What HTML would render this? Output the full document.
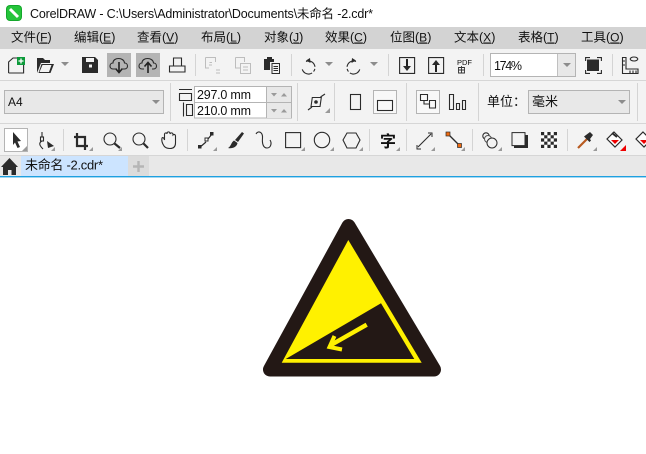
<!DOCTYPE html>
<html><head><meta charset="utf-8"><style>
html,body{margin:0;padding:0;background:#fff;overflow:hidden}
svg{display:block}
text{font-family:"Liberation Sans","Noto Sans CJK SC",sans-serif;font-size:12px;fill:#111}
.m text{font-size:12.500px}
.m tspan{text-decoration:underline;font-size:12px}
.i{fill:none;stroke:#2b2b2b;stroke-width:1.100}
.d{fill:#2b2b2b}
.g{fill:#8c8c8c}
.f{fill:#9a9a9a}
.l{fill:none;stroke:#bdbdbd;stroke-width:1}
</style></head><body>
<svg width="646" height="454" viewBox="0 0 646 454" xmlns="http://www.w3.org/2000/svg">
<rect width="646" height="454" fill="#fff"/>
<!-- title -->
<rect x="6" y="5" width="16" height="16" rx="4" fill="#14a72b"/>
<rect x="7" y="6" width="14" height="14" rx="3" fill="#25c43a"/>
<path d="M10 9L18 17" stroke="#fff" stroke-width="3"/>
<text x="30" y="18" textLength="343" style="font-size:12.500px">CorelDRAW - C:\Users\Administrator\Documents\未命名 -2.cdr*</text>
<!-- menu -->
<rect y="27" width="646" height="22" fill="#d3d3d3"/>
<g class="m">
<text x="11" y="41.500">文件(<tspan>F</tspan>)</text>
<text x="74" y="41.500">编辑(<tspan>E</tspan>)</text>
<text x="137" y="41.500">查看(<tspan>V</tspan>)</text>
<text x="201" y="41.500">布局(<tspan>L</tspan>)</text>
<text x="264" y="41.500">对象(<tspan>J</tspan>)</text>
<text x="325" y="41.500">效果(<tspan>C</tspan>)</text>
<text x="390" y="41.500">位图(<tspan>B</tspan>)</text>
<text x="454" y="41.500">文本(<tspan>X</tspan>)</text>
<text x="518" y="41.500">表格(<tspan>T</tspan>)</text>
<text x="581" y="41.500">工具(<tspan>O</tspan>)</text>
</g>
<!-- bars -->
<rect y="49" width="646" height="106" fill="#f3f3f3"/>
<rect y="80" width="646" height="1" fill="#d6d6d6"/>
<rect y="123" width="646" height="1" fill="#d6d6d6"/>
<rect y="155" width="646" height="1" fill="#d6d6d6"/>
<rect y="156" width="646" height="20" fill="#e8e8e8"/>
<rect y="176" width="646" height="1.400" fill="#1ea0e0"/>
<!-- separators -->
<g fill="#d4d4d4">
<rect x="195" y="54" width="1" height="22"/><rect x="291" y="54" width="1" height="22"/><rect x="388" y="54" width="1" height="22"/><rect x="483" y="54" width="1" height="22"/><rect x="612" y="54" width="1" height="22"/>
<rect x="170" y="83" width="1" height="38"/><rect x="297" y="83" width="1" height="38"/><rect x="334" y="83" width="1" height="38"/><rect x="406" y="83" width="1" height="38"/><rect x="478" y="83" width="1" height="38"/><rect x="637" y="83" width="1" height="38"/>
<rect x="63" y="129" width="1" height="22"/><rect x="187" y="129" width="1" height="22"/><rect x="369" y="129" width="1" height="22"/><rect x="406" y="129" width="1" height="22"/><rect x="472" y="129" width="1" height="22"/><rect x="567" y="129" width="1" height="22"/>
</g>
<!-- toolbar 1 -->
<path class="i" d="M8.600 73V62L13 58H18M23.600 64V73H8.600"/>
<rect x="17" y="57" width="8" height="8" fill="#0c9a3a"/><path d="M21 58.500V63.500M18.500 61H23.500" stroke="#fff" stroke-width="1.300"/>
<path class="d" d="M37 73V58H43L45 60H50V63H41L37 73ZM41.500 64H54L50.500 73H38.500Z"/>
<path d="M39.500 72L42.500 65H51.500L49 72Z" fill="#f3f3f3"/>
<path class="g" d="M61 62H69L65 66Z"/>
<path class="d" d="M82 57H95L98 60V73H82Z"/><rect x="86" y="58" width="8" height="4" fill="#f3f3f3"/><rect x="89" y="64.500" width="3" height="3" fill="#f3f3f3"/>
<rect x="107" y="53" width="24" height="24" fill="#b4b4b4"/><rect x="136" y="53" width="24" height="24" fill="#b4b4b4"/>
<path class="i" d="M115 69H113C109 69 109 63 113 63C113 57 124 57 124.500 63C128.500 63 128.500 69 124.500 69H123"/><path d="M119 62V72M115.500 68.500L119 72.500L122.500 68.500" fill="none" stroke="#222" stroke-width="1.600"/>
<path class="i" d="M144 69H142C138 69 138 63 142 63C142 57 153 57 153.500 63C157.500 63 157.500 69 153.500 69H152"/><path d="M148 73V63M144.500 66.500L148 62.500L151.500 66.500" fill="none" stroke="#222" stroke-width="1.600"/>
<path class="i" d="M173.500 66V58H181.500V66M169.500 66H185V72H169.500Z"/>
<path class="l" d="M205.500 57.500H215.500V62M205.500 57.500V68H209M209.500 62.500H212M209 65H212M216 70H220M216 73H220"/>
<path class="l" d="M235.500 57.500H244.500V62M235.500 57.500V68H240M240.500 63.500H250.500V73.500H240.500ZM243 67H248M243 70H248"/>
<path class="d" d="M264 59H267V57H272V59H274V62H270V70H264Z"/><path fill="#f3f3f3" stroke="#2b2b2b" d="M272 63.500H279.500V73.500H272ZM273.500 66.500H278M273.500 68.500H278M273.500 70.500H278"/>
<path class="i" d="M306 61.500A6.500 6.500 0 1 1 302 68" stroke-dasharray="12 2 3 2"/><path class="d" d="M310 58L310.500 63L306 60.500Z"/>
<path class="g" d="M325 62H333L329 66Z"/>
<path class="i" d="M356 61.500A6.500 6.500 0 1 0 360 68" stroke-dasharray="12 2 3 2"/><path class="d" d="M352 58L351.500 63L356 60.500Z"/>
<path class="g" d="M370 62H378L374 66Z"/>
<path class="i" d="M399.600 57.600H414.600V73.400H399.600Z"/><path d="M407 59V68" stroke="#222" stroke-width="2"/><path class="d" d="M403 66H411L407 71Z"/>
<path class="i" d="M428.600 57.600H443.600V73.400H428.600Z"/><path d="M436 63V72" stroke="#222" stroke-width="2"/><path class="d" d="M432 65H440L436 60Z"/>
<text x="457" y="65" style="font-size:7.500px" fill="#333">PDF</text>
<path d="M458.500 67.500H464.500V73H458.500ZM461.500 66V73M458.500 70H464.500" fill="none" stroke="#333" stroke-width=".9"/>
<rect x="490.500" y="53.500" width="85" height="23" fill="#fff" stroke="#b4b4b4"/><rect x="558" y="54" width="17" height="22" fill="#e8e8e8"/><rect x="557" y="54" width="1" height="22" fill="#c0c0c0"/>
<path class="g" d="M563 63H571L567 67Z"/>
<text x="494" y="70" textLength="28" style="font-size:12.500px">174%</text>
<rect x="587" y="59.500" width="12" height="11.500" class="d"/>
<path class="i" d="M585.600 61V57.600H590M597 57.600H601.400V61M585.600 70V73.400H590M597 73.400H601.400V70"/>
<path class="i" d="M622.500 57.500H626V69H638V73.500H622.500ZM630 73V70.500M633 73V70.500M636 73V70.500M622.500 61H625M622.500 65H625"/>
<ellipse cx="634" cy="59" rx="3.800" ry="2" class="i"/>
<!-- property bar -->
<rect x="4.500" y="90.500" width="159" height="23" fill="#e8e8e8" stroke="#b4b4b4"/>
<text x="8" y="106">A4</text>
<path class="g" d="M152 100H160L156 104Z"/>
<path class="i" stroke-width="1" d="M179.500 93.500H191.500V100.500H179.500ZM179 89.500H192M183.500 102.500V116.500M186.500 104.500H192.500V115.500H186.500Z" fill="none"/>
<rect x="194.500" y="86.500" width="97" height="31.500" fill="#fff" stroke="#b4b4b4"/>
<rect x="267" y="87" width="24" height="31" fill="#e8e8e8"/>
<path d="M194.500 102.500H291M266.500 87V118" stroke="#b4b4b4" fill="none"/>
<path class="f" d="M271 93H277L274 96.500ZM281 96.500H287L284 93ZM271 109H277L274 112.500ZM281 112.500H287L284 109Z"/>
<text x="197" y="99" style="font-size:12.500px" textLength="54">297.0 mm</text>
<text x="197" y="115" style="font-size:12.500px" textLength="54">210.0 mm</text>
<rect x="311.500" y="97.500" width="9" height="9" class="i" transform="skewX(-8) translate(14.500 0)"/>
<circle cx="316" cy="102" r="1.800" class="d"/>
<path class="i" d="M308 110L312 107M320.500 97L325 94" stroke-width="1.500"/>
<path class="f" d="M330 113V108L325 113Z"/>
<rect x="350.500" y="94.500" width="10" height="15" class="i" fill="none"/>
<rect x="373.500" y="90.500" width="23" height="23" fill="#f8f8f8" stroke="#b4b4b4"/>
<rect x="377.500" y="100.500" width="15" height="10" class="i"/>
<rect x="416.500" y="90.500" width="23" height="23" fill="#f8f8f8" stroke="#b4b4b4"/>
<path class="i" d="M420.500 94.500H427.500V100.500H420.500ZM424 100.500V104H429.500M429.500 100.500H435.500V108H429.500Z"/>
<path class="i" d="M449.500 94.500H453.500V109.500H449.500ZM456.500 103.500H459.500V109.500H456.500ZM462.500 100.500H465.500V109.500H462.500Z"/>
<text x="487" y="106" style="font-size:13px">单位：</text>
<rect x="528.500" y="90.500" width="101" height="23" fill="#e8e8e8" stroke="#b4b4b4"/>
<text x="532" y="106" style="font-size:13px">毫米</text>
<path class="g" d="M618 100H626L622 104Z"/>
<!-- toolbox -->
<rect x="4.500" y="128.500" width="23" height="23" fill="#fff" stroke="#b4b4b4"/>
<path class="d" d="M13 132L21 141L17.500 141.500L20 147L17.500 148L15 142.500L13 145Z"/>
<g class="f">
<path d="M27 151V146L22 151Z"/><path d="M55 151V147L51 151Z"/><path d="M93 151V147L89 151Z"/><path d="M122 151V147L118 151Z"/><path d="M217 151V147L213 151Z"/><path d="M305 151V147L301 151Z"/><path d="M334 151V147L330 151Z"/><path d="M363 151V147L359 151Z"/><path d="M400 151V147L396 151Z"/><path d="M435 151V147L431 151Z"/><path d="M465 151V147L461 151Z"/><path d="M502 151V147L498 151Z"/><path d="M597 151V147L593 151Z"/><path d="M626 151V147L622 151Z"/>
</g>
<path class="i" d="M42 132V137M42 141C38 143 40 146 43 149"/><rect x="40.500" y="137" width="3" height="4" class="i"/><path class="d" d="M47 141L54 146L48 148Z"/>
<path d="M77 133V146H88M74 137H85V150" fill="none" stroke="#2b2b2b" stroke-width="2.200"/>
<circle cx="110" cy="139" r="6" class="i"/><path d="M114.500 143.500L120 148" stroke="#2b2b2b" stroke-width="2.200"/>
<circle cx="139" cy="139" r="6" class="i"/><path d="M143.500 143.500L148 148" stroke="#2b2b2b" stroke-width="2.200"/>
<path class="i" d="M164 146C162 143 161.500 140 162 138C163 137 164 138 164.500 140V134C165 132.500 167 132.500 167 134V133C167.500 131.500 169.500 131.500 170 133V134C170.500 132.500 172.500 132.500 173 134V135C174 134 175.500 134.500 175.500 136V143C175.500 147 173 148.500 170 148.500C167 148.500 165.500 148 164 146Z"/>
<path d="M199 148L206 142M208 139L212 134" stroke="#2b2b2b" stroke-width="1.200"/><rect x="198" y="145" width="3.500" height="3.500" class="d"/><rect x="210" y="132" width="3.500" height="3.500" class="d"/><rect x="205" y="138" width="3" height="3" fill="#fff" stroke="#2b2b2b"/>
<path class="d" d="M235 140L242 132L244 133.500L238 142ZM234 140.500L237.500 143C237 147 232 149 228 148C231 146.500 231 142.500 234 140.500Z"/>
<path class="i" d="M256 134C258 130 263 132 262.500 138C262 143 263 148 267 148C271 148 272 143 270 140" stroke-width="1.300"/>
<rect x="285.600" y="132.600" width="15" height="15" class="i"/>
<circle cx="322" cy="140" r="7.700" class="i"/>
<path class="i" d="M347 133H356L360 140L356 148H347L343 140Z"/>
<text x="380" y="147" style="font-size:16px;font-weight:bold" fill="#2b2b2b">字</text>
<path d="M418 147L431 134" stroke="#2b2b2b" stroke-width="1.100"/><path d="M417 145V149H421M428 133H432V137" fill="none" stroke="#2b2b2b"/>
<path d="M448 134L459 145" stroke="#2b2b2b" stroke-width="1.300"/><rect x="446" y="132" width="4" height="4" fill="#ee6a10" stroke="#2b2b2b" stroke-width=".7"/><rect x="457.500" y="143.500" width="4" height="4" fill="#ee6a10" stroke="#2b2b2b" stroke-width=".7"/>
<circle cx="486" cy="136" r="3.200" class="i"/><circle cx="488" cy="139" r="3.500" fill="#f3f3f3" stroke="#555"/><circle cx="492" cy="143" r="5" fill="#f3f3f3" stroke="#2b2b2b"/>
<rect x="514" y="135" width="14" height="13" class="d"/><rect x="512" y="132.600" width="13" height="13" fill="#f3f3f3" stroke="#2b2b2b"/>
<rect x="541" y="132" width="16" height="16" fill="#fff"/>
<path class="d" d="M541 132h3.200v3.200h-3.200zM547.400 132h3.200v3.200h-3.200zM553.800 132h3.200v3.200h-3.200zM544.200 135.200h3.200v3.200h-3.200zM550.600 135.200h3.200v3.200h-3.200zM541 138.400h3.200v3.200h-3.200zM547.400 138.400h3.200v3.200h-3.200zM553.800 138.400h3.200v3.200h-3.200zM544.200 141.600h3.200v3.200h-3.200zM550.600 141.600h3.200v3.200h-3.200zM541 144.800h3.200v3.200h-3.200zM547.400 144.800h3.200v3.200h-3.200zM553.800 144.800h3.200v3.200h-3.200z"/>
<path d="M578 148L587 139" stroke="#b85a20" stroke-width="2.200"/><path class="d" d="M586 135L590 132L593 135L590 139L591 140.500L589.500 142L584 136.500Z"/>
<path d="M614 132L622 140L615 147L607 139Z" fill="#fff" stroke="#2b2b2b" stroke-width="1.200"/><path d="M611 140H619L615 144Z" fill="#ee0000"/><path d="M626 151V145L620 151Z" fill="#ee0000"/><path d="M612 133L617 137" stroke="#2b2b2b" stroke-width="2"/>
<path d="M643 132L651 140L644 147L636 139Z" fill="#fff" stroke="#2b2b2b" stroke-width="1.200"/><path d="M640 140H648L644 144Z" fill="#ee0000"/>
<!-- tabs -->
<path class="d" d="M9.500 158L18 167H16V175H11.500V170H8V175H3V167H1Z"/>
<rect x="21" y="156" width="107" height="20" fill="#cce4ff"/>
<text x="25" y="169.500" textLength="78" style="font-size:13px">未命名 -2.cdr*</text>
<rect x="128" y="156" width="21" height="20" fill="#dcdcdc"/>
<path d="M138.500 161V172M133 166.500H144" stroke="#b5b5b5" stroke-width="2.400"/>
<!-- sign -->
<path d="M348.500 226L270 369.500H434Z" fill="#231815" stroke="#231815" stroke-width="14" stroke-linejoin="round"/>
<path d="M348.300 240L281.700 362.700H421.700Z" fill="#fff100"/>
<path d="M381 303.300L285.700 359H414.300Z" fill="#231815"/>
<path d="M366.700 324.700L331 345" stroke="#fff100" stroke-width="4.400" fill="none"/>
<path d="M334.500 336L329.500 347L342 349.500" stroke="#fff100" stroke-width="4" fill="none"/>
</svg>
</body></html>
